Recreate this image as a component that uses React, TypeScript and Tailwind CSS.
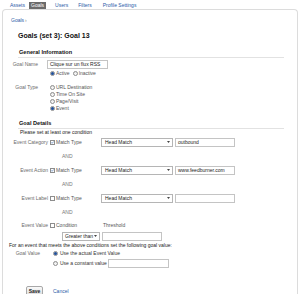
import React from "react";

const tabs = [
  { name: "Assets", ml: "ml-[8px]" },
  { name: "Goals", ml: "ml-[2px]", active: true },
  { name: "Users", ml: "ml-[7px]" },
  { name: "Filters", ml: "ml-[6px]" },
  { name: "Profile Settings", ml: "ml-[7px]" },
];

function Radio({ checked }: { checked?: boolean }) {
  return (
    <span className="flex h-[5px] w-[5px] shrink-0 items-center justify-center rounded-full border border-[#8d8d8d] bg-gradient-to-b from-[#e4e4e4] to-white">
      {checked && <span className="h-[3px] w-[3px] rounded-full bg-[#1f4f9a]" />}
    </span>
  );
}

function Checkbox({ checked }: { checked?: boolean }) {
  return (
    <span className="flex h-[5px] w-[5px] shrink-0 items-center justify-center border border-[#8d8d8d] bg-white">
      {checked && (
        <svg width="5" height="5" viewBox="0 0 5 5">
          <path d="M0.6 2.6 L2 3.9 L4.4 0.8" fill="none" stroke="#2b5fa8" strokeWidth="1" />
        </svg>
      )}
    </span>
  );
}

function Select({ value, w, pl = "pl-[3px]" }: { value: string; w: string; pl?: string }) {
  return (
    <div className={`${w} ${pl} flex h-[9px] shrink-0 items-center justify-between whitespace-nowrap border border-[#b5b5b5] bg-white pr-[2px] text-[5px] text-[#222]`}>
      <span>{value}</span>
      <svg width="3" height="2" viewBox="0 0 3 2" className="shrink-0">
        <path d="M0 0 H3 L1.5 2 Z" fill="#444" />
      </svg>
    </div>
  );
}

function Input({ value, w, ml }: { value?: string; w: string; ml: string }) {
  return (
    <div className={`${w} ${ml} flex h-[9px] shrink-0 items-center whitespace-nowrap border border-[#c4c4c4] bg-white pl-[2px] text-[5px] text-[#222]`}>
      {value}
    </div>
  );
}

function Heading({ text }: { text: string }) {
  return (
    <div className="ml-[15px] h-[9px] w-[266px] border-b border-[#e2e2e2] pl-[1px] text-[5.6px] font-bold leading-[6px] text-[#111]">
      {text}
    </div>
  );
}

function EventRow({ label, checked, value, input }: { label: string; checked?: boolean; value: string; input?: string }) {
  return (
    <div className="flex h-[14px] items-center whitespace-nowrap">
      <span className="w-[45px] text-right text-[#6a6a6a]">{label}</span>
      <span className="ml-[2px]">
        <Checkbox checked={checked} />
      </span>
      <span className="ml-[1px] w-[45px] text-[#555]">Match Type</span>
      <Select value={value} w="w-[72px]" />
      <Input value={input} w="w-[60px]" ml="ml-[2px]" />
    </div>
  );
}

function And() {
  return <div className="flex h-[14px] items-center pl-[59px] text-[#777]">AND</div>;
}

export default function App() {
  return (
    <div className="h-[294px] w-[300px] overflow-hidden bg-white font-['Liberation_Sans',Arial,sans-serif] text-[5px] leading-none text-[#333]">
      {/* tab strip */}
      <div className="flex h-[9px] items-end">
        {tabs.map((t) => (
          <span
            key={t.name}
            className={`${t.ml} flex h-[7px] items-center whitespace-nowrap px-[2px] ${
              t.active ? "bg-[#6b6b6b] text-white" : "text-[#2a5aa8]"
            }`}
          >
            {t.name}
          </span>
        ))}
      </div>

      <div className="ml-[2px] h-[290px] w-[296px] rounded-t-[4px] border border-b-0 border-[#dcdcdc]">
        <div className="flex h-[13px] items-end pl-[8px]">
          <span className="text-[#2a5aa8]">Goals</span>
          <span className="ml-[1px] text-[#888]">›</span>
        </div>

        <div className="mt-[7px] flex h-[10px] items-center pl-[15px] text-[7px] font-bold text-[#111]">
          Goals (set 3): Goal 13
        </div>

        <div className="mt-[9px]">
          <Heading text="General Information" />
        </div>

        <div className="mt-[2px] flex h-[9px] items-center">
          <span className="w-[35px] text-right text-[#6a6a6a]">Goal Name</span>
          <Input value="Clique sur un flux RSS" w="w-[61px]" ml="ml-[9px]" />
        </div>

        <div className="mt-[1px] flex h-[7px] items-center">
          <span className="w-[35px]" />
          <span className="ml-[12px]">
            <Radio checked />
          </span>
          <span className="ml-[1px] text-[#555]">Active</span>
          <span className="ml-[3px]">
            <Radio />
          </span>
          <span className="ml-[1px] text-[#555]">Inactive</span>
        </div>

        <div className="mt-[7px]">
          {["URL Destination", "Time On Site", "Page/Visit", "Event"].map((o, i) => (
            <div key={o} className="flex h-[7px] items-center">
              <span className="w-[35px] text-right text-[#6a6a6a]">{i === 0 ? "Goal Type" : ""}</span>
              <span className="ml-[12px]">
                <Radio checked={o === "Event"} />
              </span>
              <span className="ml-[1px] text-[#555]">{o}</span>
            </div>
          ))}
        </div>

        <div className="mt-[8px]">
          <Heading text="Goal Details" />
        </div>

        <div className="flex h-[6px] items-center pl-[17px] text-[#222]">Please set at least one condition</div>

        <EventRow label="Event Category" checked value="Head Match" input="outbound" />
        <And />
        <EventRow label="Event Action" checked value="Head Match" input="www.feedburner.com" />
        <And />
        <EventRow label="Event Label" value="Head Match" />
        <And />

        <div className="flex h-[12px] items-center">
          <span className="w-[45px] text-right text-[#6a6a6a]">Event Value</span>
          <span className="ml-[2px]">
            <Checkbox />
          </span>
          <span className="ml-[1px] w-[45px] text-[#555]">Condition</span>
          <span className="pl-[2px] text-[#555]">Threshold</span>
        </div>

        <div className="mt-[1px] flex h-[8px] items-center pl-[59px]">
          <Select value="Greater than" w="w-[38px]" pl="pl-[2px]" />
          <Input w="w-[60px]" ml="ml-[2px]" />
        </div>

        <div className="mt-[2px] flex h-[6px] items-center whitespace-nowrap pl-[6px] text-[#222]">
          For an event that meets the above conditions set the following goal value:
        </div>

        <div className="mt-[1px] flex h-[8px] items-center">
          <span className="w-[37px] text-right text-[#6a6a6a]">Goal Value</span>
          <span className="ml-[13px]">
            <Radio checked />
          </span>
          <span className="ml-[2px] text-[#333]">Use the actual Event Value</span>
        </div>

        <div className="mt-[2px] flex h-[8px] items-center">
          <span className="w-[37px]" />
          <span className="ml-[13px]">
            <Radio />
          </span>
          <span className="ml-[2px] text-[#333]">Use a constant value</span>
          <Input w="w-[61px]" ml="ml-[1px]" />
        </div>

        <div className="mt-[19px] flex h-[10px] items-center">
          <button className="ml-[23px] flex h-[10px] w-[17px] items-center justify-center rounded-[2px] border border-[#a8a8a8] bg-gradient-to-b from-[#fafafa] to-[#dedede] text-[5px] font-bold text-[#222]">
            Save
          </button>
          <span className="ml-[10px] text-[#2a5aa8]">Cancel</span>
        </div>
      </div>
    </div>
  );
}
